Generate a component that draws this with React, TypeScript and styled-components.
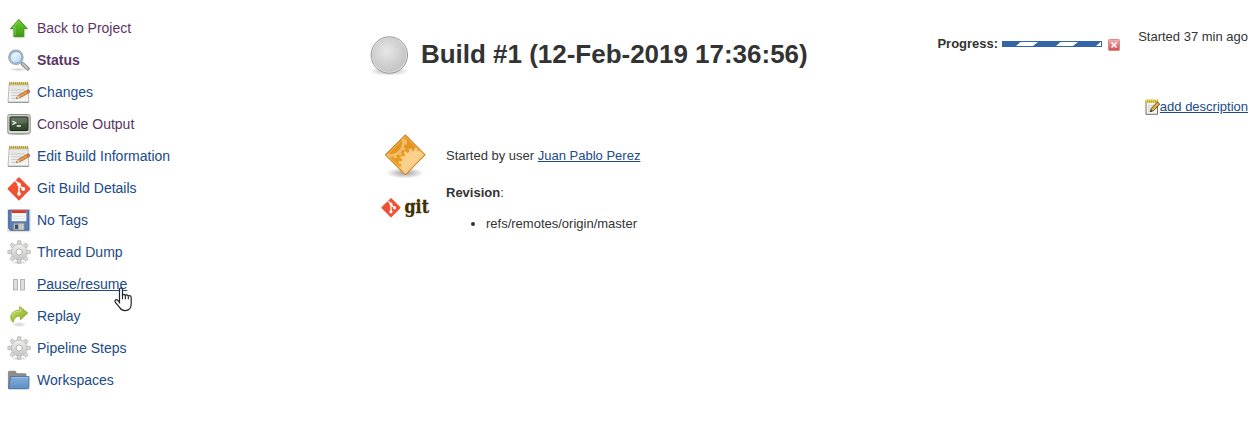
import React from 'react';
import styled, { createGlobalStyle } from 'styled-components';

const GlobalStyle = createGlobalStyle`
  body {
    margin: 0;
    background: #fff;
    color: #333;
    font-family: "Liberation Sans", Arial, Helvetica, sans-serif;
    font-size: 13px;
    line-height: 16px;
  }
  svg { display: block; flex: none; overflow: visible; }
`;

const Page = styled.div`
  display: flex;
  width: 1255px;
  height: 448px;
  overflow: hidden;
`;

const SidePanel = styled.nav`
  width: 361px;
  flex: none;
  padding: 12px 0 0 7px;
`;

const Task = styled.div`
  display: flex;
  align-items: center;
  height: 32px;
  gap: 6px;
`;

const TaskLink = styled.a<{ $visited?: boolean; $current?: boolean; $hover?: boolean }>`
  position: relative;
  font-size: 14px;
  line-height: 20px;
  color: ${(p) => (p.$visited ? '#5c3566' : '#204a87')};
  font-weight: ${(p) => (p.$current ? 700 : 400)};
  text-decoration: ${(p) => (p.$hover ? 'underline' : 'none')};
`;

const Pointer = styled.svg`
  position: absolute;
  left: 77px;
  top: 13px;
  z-index: 2;
`;

const Main = styled.main`
  flex: 1;
  padding: 34px 7px 0 0;
`;

const TopRow = styled.header`
  display: flex;
  height: 98px;
`;

const Title = styled.h1`
  margin: 0 auto 0 11px;
  padding-top: 4px;
  font-size: 26px;
  line-height: 32px;
  letter-spacing: -0.02px;
  font-weight: 700;
  white-space: nowrap;
`;

const Progress = styled.div`
  display: flex;
  align-items: flex-start;
  padding-top: 2px;
  margin-right: 18px;
  b { margin-right: 4px; }
`;

const Bar = styled.svg`
  margin: 5px 6px 0 0;
`;

const StopButton = styled.svg`
  margin-top: 3px;
`;

const Aside = styled.div`
  display: flex;
  flex-direction: column;
  align-items: flex-end;
  justify-content: space-between;
  margin-top: -5px;
  height: 86px;
  white-space: nowrap;
`;

const AddDescription = styled.div`
  display: flex;
  align-items: center;
`;

const Link = styled.a`
  color: #204a87;
  text-decoration: underline;
`;

const Cause = styled.section`
  display: flex;
  align-items: flex-start;
  height: 53px;
  padding-left: 13px;
  gap: 17px;
  p { margin: 16px 0 0; }
`;

const Revision = styled.section`
  display: flex;
  padding-left: 13px;
  gap: 17px;
  ul { margin: 15px 0 0; padding-left: 40px; }
`;

const LogoCell = styled.div`
  padding-top: 11px;
`;

const Details = styled.div``;

const icon = { width: 24, height: 24, viewBox: '0 0 24 24' };

const Defs = () => (
  <svg width="0" height="0" style={{ position: 'absolute' }}>
    <defs>
      <linearGradient id="green" x2="0" y2="1"><stop stopColor="#6ccb35" /><stop offset="1" stopColor="#3e9a10" /></linearGradient>
      <linearGradient id="lime" x2="1" y2="1"><stop stopColor="#c3dc62" /><stop offset="1" stopColor="#8cae22" /></linearGradient>
      <linearGradient id="lens" x2="1" y2="1"><stop stopColor="#a8c7ea" /><stop offset=".5" stopColor="#dcebfa" /><stop offset="1" stopColor="#a5c8ec" /></linearGradient>
      <linearGradient id="metal" x2="0" y2="1"><stop stopColor="#eee" /><stop offset="1" stopColor="#c6c6c4" /></linearGradient>
      <linearGradient id="paper" x2="0" y2="1"><stop stopColor="#e4e4e2" /><stop offset="1" stopColor="#f6f6f6" /></linearGradient>
      <linearGradient id="screen" x2="0" y2="1"><stop stopColor="#56694f" /><stop offset="1" stopColor="#2c4128" /></linearGradient>
      <linearGradient id="folder" x2="0" y2="1"><stop stopColor="#84aedb" /><stop offset="1" stopColor="#5e8fc6" /></linearGradient>
      <linearGradient id="orange" x2="0" y2="1"><stop stopColor="#e0921f" /><stop offset="1" stopColor="#ef9f24" /></linearGradient>
      <linearGradient id="red" x2="0" y2="1"><stop stopColor="#f3b4b4" /><stop offset="1" stopColor="#d94848" /></linearGradient>
      <radialGradient id="ball" cx=".42" cy=".38" r=".6"><stop stopColor="#e6e6e6" /><stop offset="1" stopColor="#c6c6c6" /></radialGradient>
      <radialGradient id="shade"><stop stopColor="#000" stopOpacity=".38" /><stop offset="1" stopColor="#000" stopOpacity="0" /></radialGradient>
    </defs>
  </svg>
);

const UpIcon = () => (
  <svg {...icon}>
    <ellipse cx="12" cy="21" rx="9.5" ry="2" fill="url(#shade)" opacity=".6" />
    <path d="M11.8 3.4 20.3 12.7h-3.4v7.8H6.9v-7.8H3.4z" fill="url(#green)" stroke="#3a8c12" strokeWidth=".9" strokeLinejoin="round" />
    <path d="M11.8 5 6 11.8h2.1v7.6" fill="none" stroke="#96e066" strokeWidth=".7" />
  </svg>
);

const SearchIcon = () => (
  <svg {...icon}>
    <ellipse cx="11" cy="21.5" rx="10" ry="2" fill="url(#shade)" opacity=".5" />
    <path d="m15.5 15.8 5.3 4.9" stroke="#808080" strokeWidth="3.8" strokeLinecap="round" />
    <path d="m15.5 15.8 5.1 4.7" stroke="#c5c5c5" strokeWidth="2" strokeLinecap="round" />
    <circle cx="8.9" cy="9.2" r="7.2" fill="url(#lens)" stroke="#a3a5a7" strokeWidth="1.1" />
    <circle cx="8.9" cy="9.2" r="6" fill="none" stroke="#789fd0" strokeWidth="1" />
    <path d="M4.5 9.5c0-3.500 3.400-5.500 6.500-4-1.500 2.800-3.400 4.100-6.500 4z" fill="#fff" opacity=".5" />
  </svg>
);

const NotesIcon = () => (
  <svg {...icon}>
    <path d="M2.2 3.5h18.8l.9 18.8H1z" fill="url(#paper)" stroke="#b4b4b1" strokeWidth=".9" />
    <path d="M1 22.3h20.9" stroke="#8f8f8c" strokeWidth="1" />
    <path d="M4.6 10h13M4.6 12.8h11M4.4 15.6h6.500M4.4 18.4h5" stroke="#c3c3c1" strokeWidth=".9" />
    <path d="M2 3.500h19.200" stroke="#d9c768" strokeWidth="2.400" />
    <path d="M2 3h19.200" stroke="#9d872f" strokeWidth="1.400" strokeDasharray="1 1" />
    <path d="M2 4.800h19.200" stroke="#a59858" strokeWidth=".6" />
    <path d="m9.3 18.5 2-3.200L21 9.800l1.700 2.500-9.600 5.500z" fill="#e69a43" stroke="#965d24" strokeWidth=".7" />
    <path d="m19.4 10.8 2-1.200q1.800 0 1.700 2.300l-2.100 1.300z" fill="#d26a5c" />
    <path d="m9 18.7 2.100-3 1.600 2.200z" fill="#f1dfbd" />
    <path d="m8.900 18.8 1-1.400.8.9z" fill="#222" />
  </svg>
);

const ConsoleIcon = () => (
  <svg {...icon}>
    <ellipse cx="12" cy="22" rx="11" ry="1.5" fill="url(#shade)" />
    <rect x=".8" y="2.5" width="22.4" height="19.3" rx="1.7" fill="#d8d8d3" stroke="#8d8d88" />
    <rect x="3" y="4.9" width="18" height="13.6" rx=".7" fill="url(#screen)" stroke="#20291d" strokeWidth="1" />
    <path d="M3.5 5.4h17v5.1q-6 2.2-17 1.6z" fill="#fff" opacity=".1" />
    <path d="m5.3 9 3.3 1.8-3.3 1.9M9.7 14h4.2" fill="none" stroke="#eef5eb" strokeWidth="1.3" />
  </svg>
);

const GitMark = ({ size }: { size: number }) => (
  <svg width={size} height={size} viewBox="0 0 24 24">
    <rect x="3.6" y="3.6" width="16.8" height="16.8" rx="1.1" transform="rotate(45 12 12)" fill="#f05133" />
    <path d="M8.3 3.9 12 7.6v9.2M12 8.2l4.2 4.1" fill="none" stroke="#fff" strokeWidth="1.5" />
    <circle cx="12" cy="7.6" r="1.9" fill="#fff" />
    <circle cx="12" cy="17" r="1.9" fill="#fff" />
    <circle cx="16.3" cy="12.2" r="1.9" fill="#fff" />
  </svg>
);

const GitIcon = () => (
  <svg {...icon}>
    <g transform="translate(0 .8)"><GitMark size={24} /></g>
  </svg>
);

const FloppyIcon = () => (
  <svg {...icon}>
    <rect x=".2" y="1" width="23.6" height="23.2" fill="#dfe0e2" />
    <path d="M2.2 2.2h19.6v20H3.5l-1.8-1.8V2.2z" fill="#5380bd" stroke="#38598d" strokeWidth=".9" />
    <rect x="4.7" y="2.6" width="14.6" height="10.6" fill="#f8f8f8" />
    <rect x="4.7" y="2.3" width="14.6" height="2.7" fill="#e43122" />
    <path d="M6 8.3h12M6 10.6h12" stroke="#dadada" strokeWidth=".8" />
    <rect x="6.1" y="15.1" width="11.6" height="7" fill="#b9bbbb" stroke="#6f7579" strokeWidth=".7" />
    <rect x="8" y="16.6" width="3.2" height="4.4" fill="#435266" />
    <path d="M13 15.5v6.2M15.3 15.5v6.2" stroke="#dedede" strokeWidth=".8" />
  </svg>
);

const GearIcon = () => (
  <svg {...icon}>
    <ellipse cx="12" cy="22.5" rx="9" ry="1.8" fill="url(#shade)" opacity=".6" />
    <g fill="#d9d9d7" stroke="#acacaa" strokeWidth=".7">
      {[0, 45, 90, 135, 180, 225, 270, 315].map((a) => (
        <path key={a} d="m10 5 .7-4.2h2.9l.7 4.2z" transform={`rotate(${a} 12.1 12)`} />
      ))}
      <circle cx="12.1" cy="12" r="7.7" />
    </g>
    <circle cx="12.1" cy="12" r="7.4" fill="url(#metal)" />
    <circle cx="12.1" cy="12" r="3" fill="#fff" stroke="#b2b1af" strokeWidth=".9" />
  </svg>
);

const PauseIcon = () => (
  <svg {...icon}>
    <g fill="#dededd" stroke="#aeaead" strokeWidth=".9">
      <rect x="6.5" y="7.5" width="4" height="10.5" />
      <rect x="13.5" y="7.5" width="4" height="10.5" />
    </g>
  </svg>
);

const ReplayIcon = () => (
  <svg {...icon}>
    <ellipse cx="12" cy="20.5" rx="8" ry="2.8" fill="url(#shade)" opacity=".5" />
    <path d="M12.7 2.6 20.8 9l-7.400 6.800v-3.700c-3.600 0-6.200 1.400-7.200 6.200C4 16.600 3.200 13.500 4.300 10.800c1.200-3 4.300-4.600 8.400-4.600z" fill="url(#lime)" stroke="#809f22" strokeWidth=".8" strokeLinejoin="round" />
    <path d="M13.6 4.7v2.500c-4.600-.2-7.600 1.200-8.500 4.200" fill="none" stroke="#e1efa0" strokeWidth=".7" />
  </svg>
);

const FolderIcon = () => (
  <svg {...icon}>
    <path d="M1.4 20.5V4q0-.8.8-.8h5.700q.7 0 .9.8l.7 1.700h8.700q.8 0 .8.800v14z" fill="#8d8e8b" stroke="#757672" strokeWidth=".7" />
    <path d="M3.6 8.600h18.500l-.2 11.500q-.1.700-.8.700H2.200q-.6 0-.5-.7z" fill="url(#folder)" stroke="#40699f" strokeWidth=".8" />
    <path d="M4.3 9.5h17" stroke="#aac8e9" strokeWidth=".7" />
  </svg>
);

const BallIcon = () => (
  <svg width="42" height="42" viewBox="0 0 42 42">
    <ellipse cx="21" cy="37" rx="20" ry="5" fill="url(#shade)" opacity=".8" />
    <circle cx="21.3" cy="21" r="18.2" fill="#f3f3f3" stroke="#929292" strokeWidth="1" />
    <circle cx="21.3" cy="21" r="16.8" fill="url(#ball)" stroke="#c0c0c0" strokeWidth=".6" />
  </svg>
);

const UserCauseIcon = () => (
  <svg width="48" height="48" viewBox="0 0 48 48">
    <clipPath id="tile"><path d="M24.4 3.5 43.2 22.8 24.4 42.3 5.5 22.8z" /></clipPath>
    <ellipse cx="24" cy="41" rx="19" ry="5.5" fill="url(#shade)" />
    <path d="M24.4 2.8 44.2 22.8 24.4 43 4.3 22.8z" fill="url(#orange)" stroke="#c97618" strokeWidth="1" strokeLinejoin="round" />
    <g clipPath="url(#tile)" fill="none">
      <circle cx="9" cy="10" r="13.5" stroke="#f2bd6c" strokeWidth="2.6" />
      <circle cx="9" cy="10" r="15.8" stroke="#f2bd6c" strokeWidth="2.400" strokeDasharray="2.700 3.300" />
      <circle cx="34.500" cy="33" r="14.500" fill="#fad08a" />
      <circle cx="34.500" cy="33" r="15.500" stroke="#fad08a" strokeWidth="2.800" strokeDasharray="2.700 2.800" />
    </g>
    <path d="M24.4 4.5 42.5 22.8 24.4 41.3 6 22.8z" fill="none" stroke="#f7bd66" strokeWidth=".8" />
  </svg>
);

const GitLogo = () => (
  <svg width="48" height="24" viewBox="0 0 48 24">
    <g transform="translate(0 1.7)"><GitMark size={20} /></g>
    <text x="23.5" y="17" fontFamily="DejaVu Serif" fontWeight="700" fontSize="18" textLength="24.5" lengthAdjust="spacingAndGlyphs" fill="#413000" stroke="#413000" strokeWidth=".3">git</text>
  </svg>
);

const SmallNoteIcon = () => (
  <svg width="15" height="16" viewBox="0 0 15 16">
    <path d="M1 2.5h11.5v12.8H1z" fill="#f3f3ef" stroke="#6f6f6b" />
    <path d="M3 6.5h6M3 8.5h5M3 10.5h3M3 12.5h3" stroke="#bbb" strokeWidth=".7" />
    <path d="M.5 2.3H13" stroke="#d0b12a" strokeWidth="3.4" />
    <path d="M1 1.5h12M1 3.5h12" stroke="#f0df7c" strokeWidth="1" strokeDasharray="1 1" />
    <path d="m5.5 12.6.9-3.100L12.500 3l2.200 2-6.200 6.600z" fill="#e9b63c" stroke="#49371b" strokeWidth=".9" />
    <path d="m5.3 12.9.6-1.900 1.400 1.100z" fill="#222" />
  </svg>
);

const tasks = [
  { label: 'Back to Project', Icon: UpIcon, visited: true },
  { label: 'Status', Icon: SearchIcon, visited: true, current: true },
  { label: 'Changes', Icon: NotesIcon },
  { label: 'Console Output', Icon: ConsoleIcon, visited: true },
  { label: 'Edit Build Information', Icon: NotesIcon },
  { label: 'Git Build Details', Icon: GitIcon },
  { label: 'No Tags', Icon: FloppyIcon },
  { label: 'Thread Dump', Icon: GearIcon },
  { label: 'Pause/resume', Icon: PauseIcon, hover: true },
  { label: 'Replay', Icon: ReplayIcon },
  { label: 'Pipeline Steps', Icon: GearIcon },
  { label: 'Workspaces', Icon: FolderIcon },
];

export default function App() {
  return (
    <Page>
      <GlobalStyle />
      <Defs />
      <SidePanel>
        {tasks.map(({ label, Icon, visited, current, hover }) => (
          <Task key={label}>
            <Icon />
            <TaskLink $visited={visited} $current={current} $hover={hover}>
              {label}
              {hover && (
                <Pointer width="18" height="25" viewBox="0 0 18 25">
                  <path d="M5.5 15.5V2.700q0-1.700 1.500-1.700t1.500 1.700v6.200q0-1.500 1.400-1.500t1.500 1.700q.1-1.200 1.400-1.200t1.500 1.700q.2-.9 1.400-.9 1.500 0 1.500 1.900v6.500q0 6.500-6.200 6.500-3.400 0-5.300-2.900L1.200 15.200q-.8-1.500.3-2.200 1.200-.8 2.400.5z" fill="#fff" stroke="#20242b" strokeWidth="1.2" />
                  <path d="M8.5 8v4.300M11.400 9v3.300M14.300 10v2.300" stroke="#20242b" strokeWidth="1.1" />
                </Pointer>
              )}
            </TaskLink>
          </Task>
        ))}
      </SidePanel>
      <Main>
        <TopRow>
          <BallIcon />
          <Title>Build #1 (12-Feb-2019 17:36:56)</Title>
          <Progress>
            <b>Progress:</b>
            <Bar width="100" height="6" viewBox="0 0 100 6">
              <path d="M0 0h100v6H0z" fill="#3465a4" />
              <path d="M18.5 1H36l-5 4H14zM58.5 1H76l-5 4H54zM98.5 1h.5v4h-5z" fill="#fff" />
            </Bar>
            <StopButton width="12" height="12" viewBox="0 0 12 12">
              <rect x=".5" y=".5" width="11" height="11" rx=".8" fill="url(#red)" stroke="#d98c8c" />
              <path d="m3.5 3.5 5 5m0-5-5 5" stroke="#fff" strokeWidth="1.7" />
            </StopButton>
          </Progress>
          <Aside>
            <span>Started 37 min ago</span>
            <AddDescription>
              <SmallNoteIcon />
              <Link>add description</Link>
            </AddDescription>
          </Aside>
        </TopRow>
        <Cause>
          <UserCauseIcon />
          <p>Started by user <Link>Juan Pablo Perez</Link></p>
        </Cause>
        <Revision>
          <LogoCell><GitLogo /></LogoCell>
          <Details>
            <b>Revision</b>:
            <ul><li>refs/remotes/origin/master</li></ul>
          </Details>
        </Revision>
      </Main>
    </Page>
  );
}
